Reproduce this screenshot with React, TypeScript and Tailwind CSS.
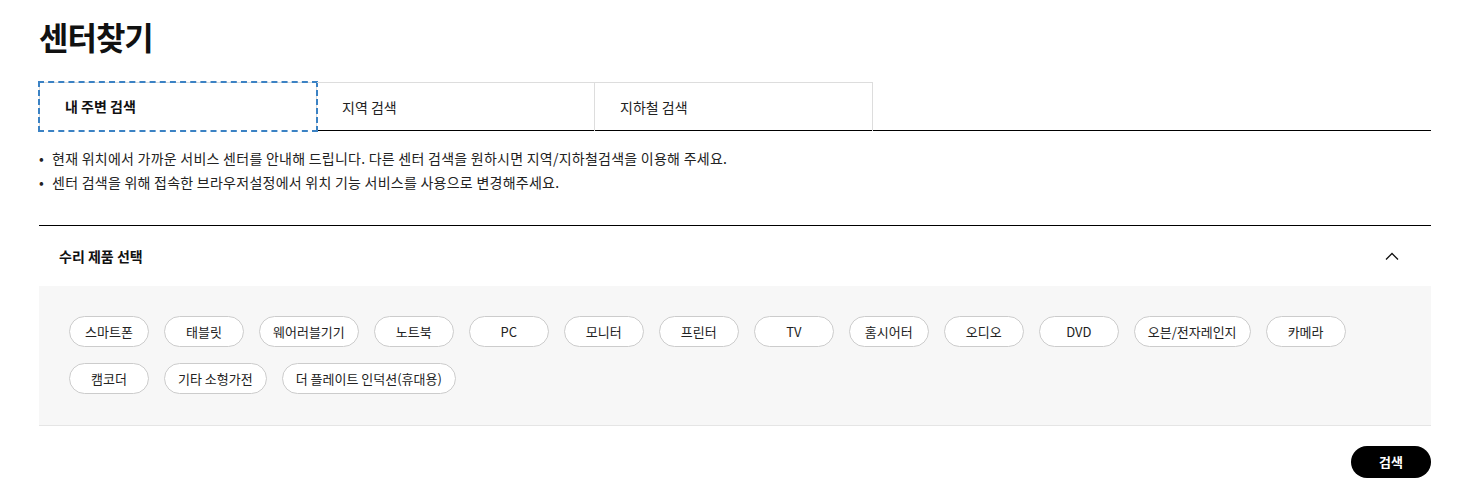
import { useState } from 'react';

const tabs = ['내 주변 검색', '지역 검색', '지하철 검색'];

const products = [
  '스마트폰', '태블릿', '웨어러블기기', '노트북', 'PC', '모니터', '프린터', 'TV',
  '홈시어터', '오디오', 'DVD', '오븐/전자레인지', '카메라', '캠코더', '기타 소형가전',
  '더 플레이트 인덕션(휴대용)',
];

export default function App() {
  const [active, setActive] = useState(0);
  const [open, setOpen] = useState(true);

  return (
    <div className="bg-white pl-[39px] pr-[31px] pt-[14px] pb-[20px] text-[#111] font-['Noto_Sans_CJK_KR','Noto_Sans',sans-serif]">
      <h1 className="text-[32px] font-bold leading-[44px] tracking-[-1px]">센터찾기</h1>

      {/* tabs */}
      <div className="mt-[24px] flex border-b border-black">
        {tabs.map((t, i) => (
          <button
            key={t}
            onClick={() => setActive(i)}
            className={
              'h-[49px] w-[278px] text-left pl-[25px] text-[14px] -mb-px border-t border-r border-[#ddd] ' +
              (i === 0 ? 'border-l ' : '') +
              (i === active
                ? 'font-bold bg-white outline-2 outline-dashed outline-[#3b82c4] -outline-offset-1 border-b border-b-white'
                : 'text-[#222]')
            }
          >
            {t}
          </button>
        ))}
      </div>

      <ul className="mt-[17px] space-y-[4px] text-[14px] leading-[20px] tracking-[0.25px] text-[#222]">
        <li className="flex gap-[8px]">
          <span>•</span>
          <span>현재 위치에서 가까운 서비스 센터를 안내해 드립니다. 다른 센터 검색을 원하시면 지역/지하철검색을 이용해 주세요.</span>
        </li>
        <li className="flex gap-[8px]">
          <span>•</span>
          <span>센터 검색을 위해 접속한 브라우저설정에서 위치 기능 서비스를 사용으로 변경해주세요.</span>
        </li>
      </ul>

      {/* accordion */}
      <div className="mt-[33px] border-t border-black">
        <button
          onClick={() => setOpen(!open)}
          className="flex h-[60px] w-full items-center justify-between pl-[20px] pr-[32px] text-[14px] font-bold"
        >
          <span>수리 제품 선택</span>
          <svg width="14" height="8" viewBox="0 0 14 8" fill="none" stroke="#111" strokeWidth="1.3">
            <path d={open ? 'M1 7.5L7 1.5L13 7.5' : 'M1 1L7 7L13 1'} />
          </svg>
        </button>
        {open && (
          <div className="flex flex-wrap gap-x-[15px] gap-y-[16px] border-b border-[#e5e5e5] bg-[#f7f7f7] px-[30px] pt-[30px] pb-[31px]">
            {products.map((p) => (
              <button
                key={p}
                className="h-[31px] min-w-[80px] rounded-full border border-[#ccc] bg-white px-[13px] text-[13px] text-[#222]"
              >
                {p}
              </button>
            ))}
          </div>
        )}
      </div>

      <div className="mt-[20px] flex justify-end">
        <button className="h-[32px] w-[80px] rounded-full bg-black text-[13px] font-bold text-white">검색</button>
      </div>
    </div>
  );
}
